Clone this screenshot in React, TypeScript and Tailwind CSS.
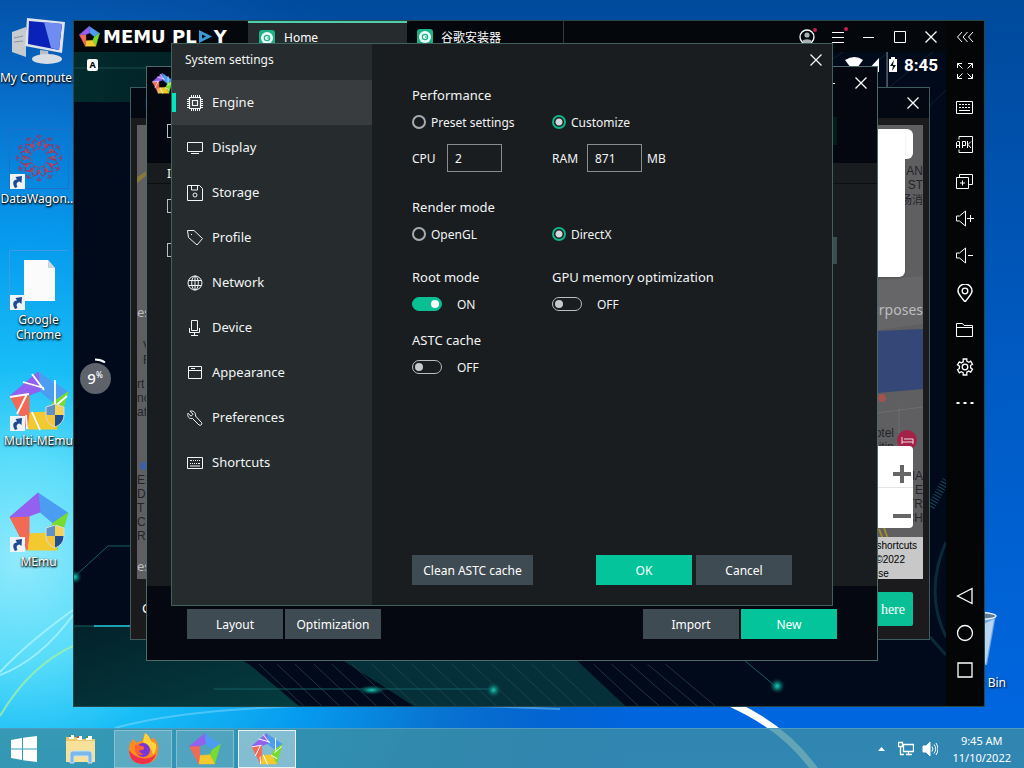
import React, { useState } from 'react';

type IconProps = { size?: number; className?: string; children: React.ReactNode };

const Icon: React.FC<IconProps> = ({ size = 16, className = '', children }) => (
  <svg width={size} height={size} viewBox={`0 0 ${size} ${size}`} fill="none" stroke="currentColor" className={`shrink-0 ${className}`} aria-hidden="true">
    {children}
  </svg>
);

const CloseIcon = () => (
  <Icon size={12}>
    <path d="M.5.5l11 11M11.5.5l-11 11" strokeWidth={1.3} />
  </Icon>
);

// Five coloured blades around an open middle
const BLADES = [
  { points: '29,1 59,21 44,31 31,20', color: '#4a9df0' },
  { points: '59,21 48,58 39,41 44,31', color: '#78dc30' },
  { points: '48,58 18,58 20,42 39,41', color: '#f2c92f' },
  { points: '18,58 1,25 20,24 20,42', color: '#f26a55' },
  { points: '1,25 29,1 31,20 20,24', color: '#9360f0' },
];

const PentaLogo: React.FC<{ size: number; swirl?: boolean }> = ({ size, swirl }) => (
  <svg width={size} height={size} viewBox="0 0 60 60" className="shrink-0" aria-hidden="true">
    {BLADES.map((b) => (
      <polygon key={b.color} points={b.points} fill={b.color} stroke={b.color} strokeWidth={1} strokeLinejoin="round" />
    ))}
    {swirl && (
      <path d="M23 3l12 16M14 11l21 6M46 9v24M58 25L44 37M49 48l-11-6M31 59l-8-18M18 58l-1-14M8 43l10-20M1 26l19-3" stroke="#fff" strokeWidth={1.8} fill="none" />
    )}
  </svg>
);

const ShortcutArrow = () => (
  <svg width="15" height="15" viewBox="0 0 15 15" className="absolute bottom-0 left-px" aria-hidden="true">
    <rect width="15" height="15" fill="#eef3f8" />
    <path d="M5 14C2 9 3 6 7 5.500L5.500 3 12 2l-.5 7-2-1.500C6.500 8 6 10 7.500 13z" fill="#1d4b93" />
  </svg>
);

const Shield = () => (
  <svg width="20" height="23" viewBox="0 0 20 23" className="absolute right-1 bottom-1" aria-hidden="true">
    <path d="M10 0L1 3v8h9z" fill="#5f93c4" />
    <path d="M10 0l9 3v8h-9z" fill="#f6d25a" />
    <path d="M1 11c0 6 4 10 9 12V11z" fill="#f4c63d" />
    <path d="M19 11c0 6-4 10-9 12V11z" fill="#1f4f8e" />
    <path d="M10 0l9 3v8c0 6-4 10-9 12-5-2-9-6-9-12V3z" fill="none" stroke="#d5dce2" />
  </svg>
);

const ComputerArt = () => (
  <svg width="60" height="60" viewBox="0 0 60 60" aria-hidden="true">
    <path d="M3 24l14-5v30l-14-5z" fill="#c6cbcf" />
    <path d="M5 30l9-2M5 34l9-1" stroke="#8c949c" />
    <path d="M18 10l38 4-3 31-37-7z" fill="#dde3e8" />
    <path d="M20 13l33 3-3 26-31-6z" fill="#0a22b8" />
    <path d="M35 14l18 2-3 26-8-2z" fill="#6f8df0" />
    <path d="M31 42l8 1 1 7h-9z" fill="#b8bfc6" />
    <ellipse cx="38" cy="51" rx="15" ry="5" fill="#d7dde2" />
  </svg>
);

const WagonArt = () => (
  <svg width="60" height="60" viewBox="0 0 60 60" fill="none" stroke="#a8305a" aria-hidden="true">
    <rect x=".5" y=".5" width="59" height="59" stroke="#1f70c8" />
    {[0, 30, 60, 90, 120, 150, 180, 210, 240, 270, 300, 330].map((a) => (
      <g key={a} transform={`rotate(${a} 30 29)`}>
        <path d="M30 20v-6l-5-4M30 14l5-3M25 18l-2-5M30 10V7M27 8l3-2 3 2" />
        <circle cx="30" cy="15" r="1.5" stroke="#d04a50" />
      </g>
    ))}
    <circle cx="30" cy="29" r="9" stroke="#c23a50" strokeDasharray="3 2" />
  </svg>
);

const PageArt = () => (
  <svg width="60" height="60" viewBox="0 0 60 60" aria-hidden="true">
    <path d="M.5 60V.5H59" fill="none" stroke="#3f9ae4" />
    <path d="M15 10h24l7 8v33H15z" fill="#fbfbfb" />
    <path d="M39 10v8h7z" fill="#cfd5da" />
  </svg>
);

const DESKTOP_ICONS = [
  { label: 'My Computer', art: <ComputerArt /> },
  { label: 'DataWagon...', art: <WagonArt />, shortcut: true },
  { label: 'Google Chrome', art: <PageArt />, shortcut: true },
  { label: 'Multi-MEmu', art: <PentaLogo size={60} swirl />, shortcut: true, shield: true },
  { label: 'MEmu', art: <PentaLogo size={60} />, shortcut: true, shield: true },
];

const Wallpaper = () => (
  <svg viewBox="0 0 1024 768" preserveAspectRatio="none" className="absolute inset-0 h-full w-full" aria-hidden="true">
    <defs>
      <linearGradient id="sky" x1="0" y1="0" x2="0" y2="1">
        <stop offset="0" stopColor="#004a9c" />
        <stop offset=".5" stopColor="#005bc4" />
        <stop offset="1" stopColor="#0068e4" />
      </linearGradient>
      <radialGradient id="glow" gradientUnits="userSpaceOnUse" cx="20" cy="560" r="640">
        <stop offset="0" stopColor="#90eafc" />
        <stop offset=".16" stopColor="#58dcfa" />
        <stop offset=".3" stopColor="#18bdf6" />
        <stop offset=".5" stopColor="#069bee" />
        <stop offset=".68" stopColor="#0877d2" />
        <stop offset="1" stopColor="#0a55b4" stopOpacity="0" />
      </radialGradient>
    </defs>
    <rect width="1024" height="768" fill="url(#sky)" />
    <rect width="1024" height="768" fill="url(#glow)" />
    <path d="M0 675Q40 660 73 615M0 672Q30 640 80 605" stroke="#b8f6ff" strokeWidth="2" fill="none" opacity=".7" />
    <path d="M0 716Q30 665 75 645" stroke="#9df0a8" strokeWidth="2" fill="none" opacity=".8" />
    <path d="M115 728Q230 695 560 709" stroke="#9fe4ff" strokeWidth="2" fill="none" opacity=".4" />
    <path d="M732 704Q785 728 815 770" stroke="#fff" strokeWidth="7" fill="none" />
  </svg>
);

const DesktopIcons = () => (
  <ul className="relative flex w-[77px] flex-col pt-2">
    {DESKTOP_ICONS.map((d) => (
      <li key={d.label} className="flex h-[121px] flex-col items-center gap-[2px]">
        <div className="relative h-[60px] w-[60px]">
          {d.art}
          {d.shield && <Shield />}
          {d.shortcut && <ShortcutArrow />}
        </div>
        <span className={`text-center text-[12px] leading-[15px] text-white [text-shadow:1px_1px_2px_#000,0_1px_2px_#000] ${d.label === 'Google Chrome' ? 'w-16' : 'whitespace-nowrap'}`}>
          {d.label}
        </span>
      </li>
    ))}
  </ul>
);

const RecycleBin = () => (
  <div className="absolute top-[610px] right-[18px] flex flex-col items-end">
    <svg width="50" height="64" viewBox="0 0 50 64" className="mr-2" aria-hidden="true">
      <path d="M2 5h46l-9 50H10z" fill="#7fb0e4" opacity=".85" />
      <path d="M36 14l10-5-8 45-6-4z" fill="#b9d5f2" />
      <ellipse cx="25" cy="6" rx="23" ry="4" fill="#5b7896" stroke="#e6edf4" strokeWidth="1.5" />
    </svg>
    <span className="mt-px text-[12px] leading-[15px] text-white [text-shadow:1px_1px_2px_#000]">Recycle Bin</span>
  </div>
);

const GameBackdrop = () => (
  <svg viewBox="0 0 873 654" preserveAspectRatio="none" className="absolute inset-0 h-full w-full" aria-hidden="true">
    <defs>
      <linearGradient id="teal-top" x1="0" x2="1">
        <stop offset="0" stopColor="#022b2c" />
        <stop offset="1" stopColor="#010a18" />
      </linearGradient>
      <linearGradient id="teal-bottom" x1="0" x2="1" y2="1">
        <stop offset="0" stopColor="#03222a" />
        <stop offset="1" stopColor="#043d41" />
      </linearGradient>
      <radialGradient id="spot">
        <stop offset="0" stopColor="#1cc8b4" />
        <stop offset=".3" stopColor="#0e857e" />
        <stop offset="1" stopColor="#04343a" stopOpacity="0" />
      </radialGradient>
    </defs>
    <rect width="873" height="654" fill="#010a1b" />
    <rect width="400" height="50" fill="url(#teal-top)" />
    <path d="M0 16h98" stroke="#1d4a4c" />
    <path d="M0 574h100l75 38 50 42H0z" fill="url(#teal-bottom)" />
    <path d="M270 609h234l48 45H340z" fill="#05303a" />
    <path
      d="M185 612l45 42M203 612l45 42M221 612l45 42M240 612l45 42M258 612l45 42M278 612l45 42M298 612l45 42M318 612l45 42M338 612l45 42M358 612l45 42M378 612l45 42M398 612l45 42M418 612l45 42M438 612l45 42M458 612l45 42M478 612l45 42M520 612l45 42M538 612l48 42M557 612l48 42M574 612l50 42M592 612l50 42"
      stroke="#2a4a50"
      opacity=".7"
    />
    <path d="M140 637h280M0 525l34-31h23M672 609l30 25M0 574h57" stroke="#126064" fill="none" />
    <path d="M20 574h40" stroke="#1c9fb0" strokeWidth="2" />
    <path d="M280 608h110" stroke="#0e8a92" strokeWidth="2" />
    <ellipse cx="420" cy="638" rx="8" ry="8" fill="url(#spot)" />
    <ellipse cx="298" cy="638" rx="14" ry="5" fill="url(#spot)" />
    <ellipse cx="704" cy="634" rx="8" ry="8" fill="url(#spot)" />
    <ellipse cx="1" cy="525" rx="7" ry="7" fill="url(#spot)" />
    <path d="M873 490q-22 50 0 95M857 585l16 18" stroke="#0a2a38" strokeWidth="3" fill="none" />
    <path d="M858 455l15-27" stroke="#12485a" strokeWidth="8" strokeDasharray="1 2" />
    <path d="M740 20l30-20M780 30l35-30M815 36l45-36M850 60l23-22" stroke="#12202e" />
    <path d="M814 0v36" stroke="#8a9096" />
  </svg>
);

const StoreIcon = () => (
  <svg width="16" height="16" viewBox="0 0 16 16" className="shrink-0" aria-hidden="true">
    <rect width="16" height="16" rx="3" fill="#1fb088" />
    <circle cx="8" cy="8" r="6" fill="#e9fff8" />
    <circle cx="8" cy="8" r="2.700" fill="none" stroke="#1fb088" strokeWidth="1.200" />
    <path d="M8 8h3" stroke="#1fb088" />
  </svg>
);

const TitleBar = () => (
  <header className="relative flex h-[31px] items-stretch bg-[#04080d] text-white">
    <div className="flex w-[174px] items-center gap-[3px] pl-[5px]">
      <PentaLogo size={21} />
      <span className="flex items-center font-['DejaVu_Sans',sans-serif] text-[18px] leading-5 font-bold whitespace-nowrap">
        MEMU PL
        <svg width="15" height="13" viewBox="0 0 15 13" className="mx-px" aria-hidden="true">
          <path d="M1 0l13 6.500L1 13z" fill="#3a9bd8" />
          <path d="M4 4.500l4 2-4 2z" fill="#04080d" />
        </svg>
        Y
      </span>
    </div>
    <div className="flex w-[159px] items-center gap-[9px] border-t-2 border-[#4fcfae] bg-[#262b2e] pl-[11px] text-[12px]">
      <StoreIcon />
      <span>Home</span>
    </div>
    <div className="flex w-[157px] items-center gap-2 border-r border-[#33393d] pl-[10px] text-[12px]">
      <StoreIcon />
      <span className="font-['Noto_Sans_CJK_SC',sans-serif]">谷歌安装器</span>
    </div>
    <div className="ml-auto flex items-center">
      <button aria-label="Account" className="relative flex w-[31px] justify-center">
        <Icon size={16}>
          <circle cx="8" cy="8" r="7" strokeWidth={1.3} />
          <circle cx="8" cy="6" r="2.6" fill="#a9b0b5" stroke="none" />
          <path d="M3 12.500c1-3 9-3 10 0-3 3-7 3-10 0z" fill="#a9b0b5" stroke="none" />
        </Icon>
        <i className="absolute -top-px right-[5px] h-1 w-1 rounded-full bg-[#c81e4c]" />
      </button>
      <button aria-label="Menu" className="relative flex w-[31px] justify-center">
        <Icon size={12}>
          <path d="M0 1.500h12M0 6.500h12M0 11.500h12" />
        </Icon>
        <i className="absolute -top-1 right-[5px] h-1 w-1 rounded-full bg-[#c81e4c]" />
      </button>
      <button aria-label="Minimize" className="flex w-[31px] justify-center">
        <Icon size={12}>
          <path d="M0 6.500h11" />
        </Icon>
      </button>
      <button aria-label="Maximize" className="flex w-[31px] justify-center">
        <Icon size={12}>
          <path d="M.5.5h11v11H.5z" />
        </Icon>
      </button>
      <button aria-label="Close emulator" className="flex w-[31px] justify-center">
        <CloseIcon />
      </button>
    </div>
  </header>
);

const SPEAKER = 'M.5 6h3L9.5 1v15L3.5 11h-3z';

const TOOLS = [
  { name: 'Full screen', art: <path d="M1.500 6V1.500H6M1.500 1.500l5 5M12 1.500h4.500V6M16.500 1.500l-5 5M1.500 12v4.500H6M1.500 16.500l5-5M12 16.500h4.500V12M16.500 16.500l-5-5" /> },
  { name: 'Key mapping', art: <path d="M.5 2.500h16v12H.5zM3 5.500h2m1 0h2m1 0h2m1 0h2M3 8.500h2m1 0h2m1 0h2m1 0h2M3 11.500h11" /> },
  { name: 'Install APK', art: <path d="M3 3.500V.5h13.500v16H3v-3M.5 12V6.500l1-1h2v6.500M.5 9.500h3M6.500 12V5.500h3v4h-3M11.500 5v7M15 5.500l-3 3 3 3.500" /> },
  { name: 'Multi instance', art: <path d="M.5 4.500h12v11H.5zM3.500 4V1.500h13v10h-4M4 10h5M6.500 7.500v5" /> },
  { name: 'Volume up', art: <path d={`${SPEAKER}M11 8.500h7M14.500 5v7`} /> },
  { name: 'Volume down', art: <path d={`${SPEAKER}M12 8.500h5`} /> },
  { name: 'Location', art: <><path d="M9 18C5 12.500 2 10 2 7a7 7 0 0 1 14 0c0 3-3 5.500-7 11z" strokeWidth={1.5} /><circle cx="9" cy="7" r="2.800" strokeWidth={1.300} /></> },
  { name: 'Shared folder', art: <path d="M.5 15.500v-13h6l1.500 2h8.500v11zM.5 6.500h16" /> },
  {
    name: 'Settings',
    art: (
      <>
        <path d="M7.200 1h3.600v2.200l2 1.100 1.900-1.100 1.800 3.100-1.900 1.200v2.400l1.900 1.200-1.800 3.100-1.900-1.100-2 1.100V17H7.200v-2.200l-2-1.100-1.900 1.100-1.800-3.100 1.900-1.200V8.100L1.500 6.900l1.800-3.100 1.900 1.100 2-1.100z" strokeWidth={1.300} />
        <circle cx="9" cy="9" r="2.800" strokeWidth={1.300} />
      </>
    ),
  },
  { name: 'More', art: <path d="M.5 8h3M7.500 8h3M14.500 8h3" strokeWidth={2} /> },
];

const NAV_KEYS = [
  { name: 'Back', art: <path d="M1.500 9L16 1.500v15z" strokeWidth={1.300} /> },
  { name: 'Home key', art: <circle cx="9" cy="9" r="7.500" strokeWidth={1.300} /> },
  { name: 'Recent apps', art: <path d="M2 2h14v14H2z" strokeWidth={1.300} /> },
];

const ToolStrip = () => (
  <aside className="relative flex w-[38px] flex-col items-center bg-[#030507] pb-[18px] text-white">
    <button aria-label="Collapse toolbar" className="flex h-[31px] items-center">
      <Icon size={18}>
        <path d="M6 4L1.500 9 6 14M11.500 4L7 9l4.500 5M17 4l-4.500 5 4.500 5" />
      </Icon>
    </button>
    {TOOLS.map((t) => (
      <button key={t.name} aria-label={t.name} className="flex h-[37px] items-center">
        <Icon size={18}>{t.art}</Icon>
      </button>
    ))}
    <div className="mt-auto flex flex-col">
      {NAV_KEYS.map((t) => (
        <button key={t.name} aria-label={t.name} className="flex h-[37px] items-center">
          <Icon size={18}>{t.art}</Icon>
        </button>
      ))}
    </div>
  </aside>
);

const EmulatorWindow = () => (
  <section className="absolute top-5 right-[39px] bottom-[21px] left-[73px] flex border border-[#284846] bg-[#030507]">
    <div className="flex flex-1 flex-col">
      <TitleBar />
      <div className="relative flex-1 overflow-hidden">
        <GameBackdrop />
        <div className="relative flex h-[26px] items-center justify-between pr-2 pl-[13px] text-white">
          <span className="flex h-3 w-[11px] items-center justify-center rounded-xs bg-white text-[9px] leading-3 font-bold text-black">A</span>
          <div className="flex items-center gap-[6px]">
            <svg width="60" height="16" viewBox="0 0 60 16" fill="#fff" aria-hidden="true">
              <path d="M7 3q10-6 18 0l-9 12z" />
              <path d="M41 1v14H28z" />
              <path d="M51 2h2V0h4v2h2v13h-8z" />
              <path d="M56 3l-4 6h3l-1 5 4-6h-3z" fill="#041018" />
            </svg>
            <span className="font-['Roboto',sans-serif] text-[17px] leading-5 font-bold">8:45</span>
          </div>
        </div>
        <div className="absolute top-[306px] left-[5px] flex flex-col items-center">
          <svg width="32" height="5" viewBox="0 0 32 5" aria-hidden="true">
            <path d="M16 1.500q6 0 10 3" stroke="#fff" strokeWidth="2" fill="none" />
          </svg>
          <div className="flex h-[31px] w-[31px] items-center justify-center rounded-full bg-[#5d626b] text-[15px] font-medium text-white">
            9<sup className="text-[8px]">%</sup>
          </div>
        </div>
      </div>
    </div>
    <ToolStrip />
  </section>
);

const MapArt = () => (
  <svg viewBox="0 0 786 454" preserveAspectRatio="none" className="absolute inset-0 h-full w-full" aria-hidden="true">
    <rect width="786" height="454" fill="#5f5f62" />
    <path d="M0 52l10-6v4L0 58z" fill="#8a7a3a" />
    <path d="M740 155l46-4v48l-46 6z" fill="#666668" />
    <path d="M740 206l46-2v60l-46 4z" fill="#344776" />
    <circle cx="745" cy="273" r="4" fill="#a05450" />
    <path d="M740 288l46-6M762 282v36" stroke="#6e6e70" />
    <circle cx="770" cy="315" r="10" fill="#a32348" />
    <path d="M765 312v7M765 317h11v2M767 314h9v3" stroke="#f3dce3" fill="none" />
    <path d="M746 400l5 14M742 404l4 10" stroke="#a08c2c" strokeWidth="2" />
    <circle cx="7" cy="341" r="4" fill="#3d5fa8" />
  </svg>
);

const MapWindow = () => (
  <section className="absolute top-[87px] right-[94px] bottom-[88px] left-[130px] flex flex-col border border-[#3d5c5b] bg-[#1b1b1e]">
    <header className="flex h-[30px] items-center justify-between bg-[#040812] pr-[10px] pl-[14px] text-[13px] text-white">
      <span>Location</span>
      <button aria-label="Close location"><CloseIcon /></button>
    </header>
    <div className="relative mx-[6px] mt-[7px] h-[454px] overflow-hidden font-['Liberation_Sans',sans-serif] text-[12px] leading-[14px] text-[#242426]">
      <MapArt />
      <span className="absolute top-[177px] left-0 font-['Noto_Sans',sans-serif] text-[13px] leading-5 text-[#bcbcbe]">es</span>
      <span className="absolute top-[175px] right-0 font-['Noto_Sans',sans-serif] text-[14px] leading-5 text-[#bcbcbe]">purposes</span>
      <span className="absolute top-[431px] left-0 font-['Noto_Sans',sans-serif] text-[13px] leading-5 text-[#bcbcbe]">es</span>
      <p className="absolute top-[214px] left-[6px]">V<br />R</p>
      <p className="absolute top-[252px] left-0">rt<br />nc<br />at</p>
      <p className="absolute top-[348px] left-0">EI<br />DA<br />T<br />C<br />R</p>
      <p className="absolute top-[39px] right-0 text-right">AN<br />ST</p>
      <span className="absolute top-[67px] right-0 font-['Noto_Sans_CJK_SC',sans-serif] text-[11px]">汤消</span>
      <p className="absolute top-[301px] right-[29px] text-right">Hotel<br />Citin</p>
      <p className="absolute top-[344px] right-0 text-right">MA<br />E<br />TR<br />CH</p>
      <div className="absolute top-1 right-[10px] h-[30px] w-[300px] rounded-md bg-white" />
      <div className="absolute top-1 right-[18px] h-[148px] w-[300px] rounded-md bg-white shadow" />
      <div className="absolute top-[321px] right-[10px] flex h-[82px] w-10 flex-col rounded-sm bg-white">
        <button aria-label="Zoom in" className="flex flex-1 items-center justify-end border-b border-[#e4e4e4] pt-4 pr-[2px]">
          <Icon size={18} className="text-[#666]"><path d="M0 9h18M9 0v18" strokeWidth={4} /></Icon>
        </button>
        <button aria-label="Zoom out" className="flex flex-1 items-center justify-end pt-4 pr-[2px]">
          <Icon size={18} className="text-[#666]"><path d="M0 9h18" strokeWidth={4} /></Icon>
        </button>
      </div>
      <p className="absolute right-0 bottom-0 h-[42px] w-[52px] bg-[#c8c8c9] pt-[2px] pr-[6px] text-right text-[10px] text-black">
        shortcuts<span className="block pr-3">©2022</span><span className="block pr-[29px]">Use</span>
      </p>
    </div>
    <footer className="flex flex-1 items-center justify-between pr-4 pl-[11px]">
      <span className="text-[13px] text-white">Current</span>
      <button className="h-[34px] w-24 rounded-xs bg-[#08bf96] pr-2 text-right font-['Liberation_Serif',serif] text-[14px] text-white">Move here</button>
    </footer>
  </section>
);

const FlatButton: React.FC<{ label: string; accent?: boolean; wide?: boolean }> = ({ label, accent, wide }) => (
  <button className={`h-[30px] pt-[2px] text-[12px] text-white ${accent ? 'bg-[#04c49b]' : 'bg-[#3f4b53]'} ${wide ? 'w-[121px]' : 'w-24'}`}>{label}</button>
);

const TickBox: React.FC<{ label: string }> = ({ label }) => (
  <input type="checkbox" aria-label={label} className="h-[14px] w-[14px] appearance-none border border-[#b9bfc2]" />
);

const ManagerWindow = () => (
  <section className="absolute top-[66px] right-[146px] bottom-[67px] left-[146px] flex flex-col border border-[#4b6c6b] bg-[#1a1d20] text-white">
    <header className="flex h-8 items-center justify-between bg-[#040710] pr-[10px] pl-[5px]">
      <PentaLogo size={21} swirl />
      <div className="flex items-center gap-[19px]">
        <button aria-label="Minimize manager"><Icon size={12}><path d="M0 6.500h11" /></Icon></button>
        <button aria-label="Close manager"><CloseIcon /></button>
      </div>
    </header>
    <div className="flex h-16 items-center justify-between bg-[#040710] pr-10 pl-5">
      <TickBox label="Select all" />
      <div className="h-7 w-24 bg-[#061a1a]" />
    </div>
    <div className="flex h-[21px] items-center border-b border-[#0c0f12] bg-[#191c1f] pt-[2px] pl-5 text-[12px]">Index</div>
    <div className="flex h-11 items-center pl-5"><TickBox label="Instance 1" /></div>
    <div className="flex h-11 items-center justify-between pr-10 pl-5">
      <TickBox label="Instance 2" />
      <div className="h-[27px] w-24 bg-[#3c4d52]" />
    </div>
    <footer className="mt-auto flex h-[74px] items-center justify-between bg-[#050811] px-10 pt-[2px]">
      <div className="flex gap-[2px]">
        <FlatButton label="Layout" />
        <FlatButton label="Optimization" />
      </div>
      <div className="flex gap-[2px]">
        <FlatButton label="Import" />
        <FlatButton label="New" accent />
      </div>
    </footer>
  </section>
);

const MENU = [
  { name: 'Engine', art: <><path d="M2.500 2.500h11v11h-11zM5.500 5.500h5v5h-5z" strokeWidth={1.200} /><path d="M1 4v9M15 4v9M4 1h9M4 15h9" strokeWidth={2} strokeDasharray="1 1" /></> },
  { name: 'Display', art: <path d="M.5 2.500h15v9H.5zM4 13.500h8" /> },
  { name: 'Storage', art: <><path d="M.5.500h12l3 3v12H.5zM4.500 1v4h6V1" /><circle cx="8" cy="10" r="2" /></> },
  { name: 'Profile', art: <><path d="M.5.500h6.500l8.500 8-5.500 6.500L1.500 7.500z" /><path d="M4 4.500h1" /></> },
  { name: 'Network', art: <><circle cx="8" cy="8" r="7" /><ellipse cx="8" cy="8" rx="3.300" ry="7" /><path d="M1.500 5.500h13M1.500 10.500h13M8 1v14" /></> },
  { name: 'Device', art: <path d="M4.500.5h6v10h-6zM2.500 8v4.500h10V8M7.500 12.500v3M4 15.500h7" /> },
  { name: 'Appearance', art: <path d="M1.500 1.500h13v12h-13zM1.500 5.500h13M4 3.500h4" /> },
  { name: 'Preferences', art: <path d="M3 1.200l3 3-2 2-3-3c-1 3 1 6 4.500 5.300l6.500 6.500c2 1 3.500-.8 2.500-2.500L8.500 6C9.200 2.500 6 .2 3 1.200z" /> },
  { name: 'Shortcuts', art: <path d="M.5 2.500h15v11H.5zM3 5.500h2m1 0h1m1 0h1m1 0h1m1 0h1M3 8.500h1m1 0h1m1 0h1m1 0h1m1 0h2M3 11h10" /> },
];

const Radio: React.FC<{ name: string; label: string; checked?: boolean }> = ({ name, label, checked }) => (
  <label className="flex h-5 w-[140px] items-center gap-[5px] text-[12px]">
    <input
      type="radio"
      name={name}
      defaultChecked={checked}
      className="h-[14px] w-[14px] appearance-none rounded-full border-2 border-[#a7adb0] checked:border-[#12b48a] checked:bg-[radial-gradient(circle,#d5d8da_3px,transparent_4px)]"
    />
    <span className="pt-px">{label}</span>
  </label>
);

const Toggle: React.FC<{ title: string; initial?: boolean }> = ({ title, initial = false }) => {
  const [on, setOn] = useState(initial);
  return (
    <div className="w-[140px]">
      <h3 className="text-[13px] leading-5 whitespace-nowrap">{title}</h3>
      <label className="mt-[7px] flex h-5 items-center gap-[15px] text-[12px]">
        <input
          type="checkbox"
          aria-label={title}
          checked={on}
          onChange={() => setOn(!on)}
          className="flex h-[14px] w-[30px] appearance-none items-center rounded-full border border-[#b9bec1] px-[2px] before:h-2 before:w-2 before:rounded-full before:bg-[#c5c9cb] checked:justify-end checked:border-[#0abf94] checked:bg-[#0abf94] checked:before:bg-white"
        />
        <span className="pt-px">{on ? 'ON' : 'OFF'}</span>
      </label>
    </div>
  );
};

const NumberBox: React.FC<{ label: string; value: string; unit?: string }> = ({ label, value, unit }) => (
  <label className="flex w-[140px] items-center text-[12px]">
    <span className="w-[35px] pt-px">{label}</span>
    <input type="text" defaultValue={value} className="h-7 w-[55px] border border-[#878d91] bg-transparent px-[7px] pt-px" />
    {unit && <span className="pt-px pl-[5px]">{unit}</span>}
  </label>
);

const SettingsDialog = () => {
  const [active, setActive] = useState('Engine');
  return (
    <section className="absolute top-[43px] right-[191px] bottom-[122px] left-[171px] flex border border-[#3f625f] bg-[#1a1d20] text-[#f2f4f5]">
      <nav className="flex w-[200px] flex-col bg-[#262c2e]">
        <h2 className="flex h-9 items-center pb-1 pl-[13px] text-[12px]">System settings</h2>
        {MENU.map((m) => (
          <button
            key={m.name}
            onClick={() => setActive(m.name)}
            className={`relative flex h-[45px] items-center gap-[9px] pl-[15px] text-[13px] ${active === m.name ? 'bg-[#393c3e]' : ''}`}
          >
            {active === m.name && <i className="absolute left-0 h-[19px] w-1 bg-[#00e6c3]" />}
            <Icon size={16}>{m.art}</Icon>
            <span className="pt-px">{m.name}</span>
          </button>
        ))}
      </nav>
      <div className="flex flex-1 flex-col">
        <header className="flex h-8 items-center justify-end pr-[10px]">
          <button aria-label="Close settings"><CloseIcon /></button>
        </header>
        <form className="flex flex-1 flex-col pt-[9px] pr-10 pb-5 pl-10" onSubmit={(e) => e.preventDefault()}>
          <h3 className="text-[13px] leading-5">Performance</h3>
          <div className="mt-[7px] flex">
            <Radio name="performance" label="Preset settings" />
            <Radio name="performance" label="Customize" checked />
          </div>
          <div className="mt-3 flex">
            <NumberBox label="CPU" value="2" />
            <NumberBox label="RAM" value="871" unit="MB" />
          </div>
          <h3 className="mt-[25px] text-[13px] leading-5">Render mode</h3>
          <div className="mt-[7px] flex">
            <Radio name="render" label="OpenGL" />
            <Radio name="render" label="DirectX" checked />
          </div>
          <div className="mt-[23px] flex">
            <Toggle title="Root mode" initial />
            <Toggle title="GPU memory optimization" />
          </div>
          <div className="mt-4 flex">
            <Toggle title="ASTC cache" />
          </div>
          <div className="mt-auto flex items-center gap-1">
            <FlatButton label="Clean ASTC cache" wide />
            <span className="flex-1" />
            <FlatButton label="OK" accent />
            <FlatButton label="Cancel" />
          </div>
        </form>
      </div>
    </section>
  );
};

const TASK = 'flex h-[38px] w-[58px] items-center justify-center border';

const Taskbar = () => (
  <footer className="relative flex h-10 items-center border-t border-[#4d9cc0] bg-[#3c8ea4]/80 text-white">
    <button aria-label="Start" className="flex w-12 justify-center">
      <svg width="28" height="26" viewBox="0 0 28 26" fill="#fff" aria-hidden="true">
        <path d="M1 4l11-2v10.500H1zM13 1.800L27 0v12.500H13zM1 13.500h11V24L1 22zM13 13.500h14V26l-14-1.800z" />
      </svg>
    </button>
    <button aria-label="Files" className="ml-[17px] flex w-8">
      <svg width="32" height="30" viewBox="0 0 32 30" aria-hidden="true">
        <path d="M1 3h10l2 2h17v23H1z" fill="#e9c869" />
        <path d="M4 1h5v4H4zM12 2h5v4h-5zM21 2h6v4h-6z" fill="#fff" />
        <path d="M4 1h2v2H4zM21 2h2v2h-2z" fill="#3a9c4c" />
        <path d="M12 2h2v2h-2z" fill="#d9483c" />
        <path d="M1 7h29v21H1z" fill="#f8e29a" />
        <path d="M5 29V20q0-3 3-3h16q3 0 3 3v9h-4v-7H9v7z" fill="#7cb8e8" stroke="#c4e2f6" />
      </svg>
    </button>
    <div className="ml-[17px] flex gap-1">
      <button aria-label="Firefox" className={`${TASK} border-[#9cc8d4]/70 bg-white/20`}>
        <svg width="32" height="32" viewBox="0 0 32 32" aria-hidden="true">
          <path d="M2 16q0-7 5-10l2 4q4-2 6-2l3-8q4 2 6 7 2-1 2-3 6 6 5 13-1 14-15 14Q2 31 2 16z" fill="#ff8a1e" />
          <path d="M2 17q4 6 12 8t15-4q-3 10-13 10Q3 31 2 17z" fill="#f2304a" />
          <path d="M18 0q4 2 6 8l5 3q1 6-3 11-1-8-10-13z" fill="#ffd43a" />
          <circle cx="16" cy="17" r="7" fill="#7a35d8" />
          <path d="M8 12q3-1 6 1 4 0 3 3-2 2-5 1 1 4 5 4-6 3-9-3z" fill="#ff5f30" />
        </svg>
      </button>
      <button aria-label="MEmu" className={`${TASK} border-[#9cc8d4]/70 bg-white/15`}>
        <PentaLogo size={32} />
      </button>
      <button aria-label="Multi-MEmu" className={`${TASK} border-white/80 bg-white/40`}>
        <PentaLogo size={32} swirl />
      </button>
    </div>
    <div className="ml-auto flex items-center pr-[13px]">
      <svg width="7" height="4" viewBox="0 0 7 4" fill="#fff" className="mr-[13px]" aria-hidden="true"><path d="M0 4l3.500-4L7 4z" /></svg>
      <Icon size={16} className="mr-2">
        <path d="M5.500 3.500h10v7h-10zM8 13.500h6M10.500 11v2M2.500 6v7.500H6M.5 1.500h4v4h-4z" strokeWidth={1.300} />
      </Icon>
      <Icon size={16} className="mr-[14px]">
        <path d="M1 5h3l4-4v14l-4-4H1z" fill="currentColor" />
        <path d="M10 5.500q2 2.500 0 5M12 3.500q3.500 4.500 0 9M14 2q4 6 0 12" />
      </Icon>
      <time className="text-center text-[11px] leading-[17px]">9:45 AM<br />11/10/2022</time>
    </div>
  </footer>
);

export default function App() {
  return (
    <main className="relative flex min-h-screen flex-col overflow-hidden font-['Noto_Sans','Noto_Sans_CJK_SC',sans-serif]">
      <Wallpaper />
      <div className="relative flex-1">
        <DesktopIcons />
        <RecycleBin />
        <EmulatorWindow />
        <MapWindow />
        <ManagerWindow />
        <SettingsDialog />
      </div>
      <Taskbar />
    </main>
  );
}
